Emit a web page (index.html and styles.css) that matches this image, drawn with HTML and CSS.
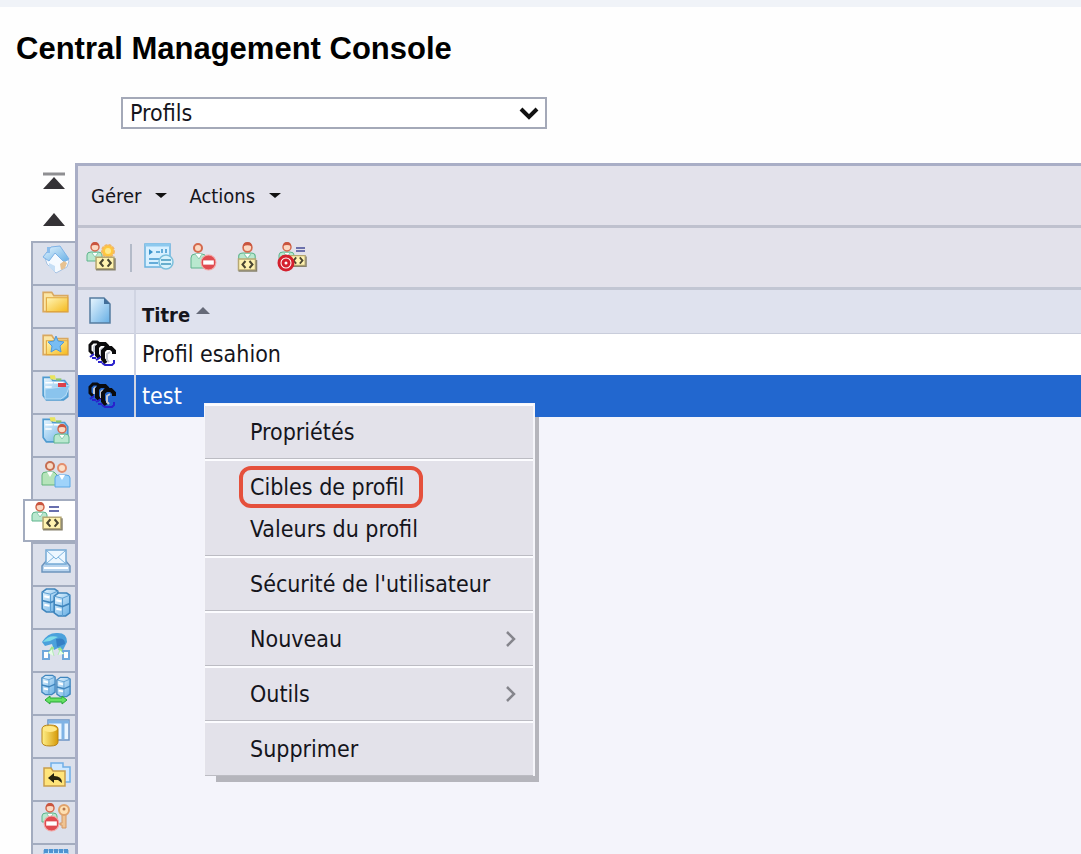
FILE: index.html
```
<!DOCTYPE html>
<html lang="fr">
<head>
    <meta charset="utf-8">
    <title>Central Management Console</title>
    <link rel="stylesheet" href="styles.css">
</head>
<body>

<!-- shared icon parts -->
<svg class="defs" aria-hidden="true">
    <defs>
        <linearGradient id="gold" x1="0" y1="0" x2="1" y2="1">
            <stop offset="0" stop-color="#fff6b8"/><stop offset="1" stop-color="#f5b91c"/>
        </linearGradient>
        <linearGradient id="blue" x1="0" y1="0" x2="1" y2="1">
            <stop offset="0" stop-color="#e8f6ff"/><stop offset="1" stop-color="#65aee4"/>
        </linearGradient>
        <linearGradient id="barrel" x1="0" y1="0" x2="1" y2="0">
            <stop offset="0" stop-color="#fff08a"/><stop offset="1" stop-color="#d69a08"/>
        </linearGradient>
        <symbol id="person" viewBox="0 0 18 20">
            <path d="M1 19v-6q0-3 4-3h7q4 0 4 3v6z" fill="#b9e8cf" stroke="#5fb48c"/>
            <path d="M6 11l3 4 3-4" fill="#fff" stroke="#8ccbb0"/>
            <circle cx="9" cy="5" r="4" fill="#fbd9c3" stroke="#d4694d" stroke-width="1.5"/>
            <path d="M5 4q0-4 4-4t4 4q-4-2-8 0" fill="#c9553f"/>
        </symbol>
        <symbol id="code" viewBox="0 0 20 14">
            <path d="M1 1h17v11H1z" fill="#fff3b0" stroke="#b6a873" stroke-width="1.5"/>
            <path d="M1 13h18V2" fill="none" stroke="#88826c" stroke-width="1.5"/>
            <path d="M8 3L5 6.500l3 3.500M12 3l3 3.500-3 3.500" fill="none" stroke="#4a4632" stroke-width="2"/>
        </symbol>
        <symbol id="folder" viewBox="0 0 28 22">
            <path d="M2 20V2h8l2 3h13v15z" fill="#fbe6a5" stroke="#d9a860" stroke-width="1.500"/>
            <path d="M5 7h20v13H5z" fill="url(#gold)" stroke="#e0a63c"/>
        </symbol>
        <symbol id="bluefolder" viewBox="0 0 28 25">
            <path d="M2 20V3h7l2 3h11l3 4v11l-4 3H5z" fill="url(#blue)" stroke="#4f9bd0" stroke-width="1.500"/>
            <path d="M4 8h7M4 12h6M12 8h9" stroke="#fff" stroke-width="1.500"/>
            <path d="M8 1h5l1 4H9z" fill="#e9e45c"/>
            <path d="M14 4h5v2h-5z" fill="#8cc66c"/>
        </symbol>
        <symbol id="server" viewBox="0 0 17 24">
            <path d="M1 4l4-3h8l3 2v17l-4 3H5l-4-3z" fill="url(#blue)" stroke="#3f85bd" stroke-width="1.500"/>
            <path d="M1 4l8 2 7-3M9 6v17" fill="none" stroke="#5d9fd2"/>
            <path d="M1 12l8 2 7-3" fill="none" stroke="#3f85bd" stroke-width="1.500"/>
            <path d="M3 8l5 1M3 16l5 1" stroke="#fff" stroke-width="2"/>
        </symbol>
        <symbol id="noentry" viewBox="0 0 16 16">
            <circle cx="8" cy="8" r="7" fill="#e04b50" stroke="#f3a7a5"/>
            <path d="M3 6h10v4H3z" fill="#fff"/>
        </symbol>
        <symbol id="profile" viewBox="0 0 28 30">
            <g fill="none">
                <path d="M12 5l-3-2H5L2 6v6l3 3" stroke="#0b0b0d" stroke-width="3"/>
                <path d="M8 6L6 8v5" stroke="#c4c8d2" stroke-width="2"/>
                <path d="M2 18l4-3M4 19h4" stroke="#2a22cc" stroke-width="2"/>
                <path d="M20 8l-3-3h-5L9 8v8l3 3" stroke="#0b0b0d" stroke-width="4"/>
                <path d="M15 9l-2 2v6" stroke="#c4c8d2" stroke-width="2"/>
                <path d="M8 21l5-3M10 23h4" stroke="#2a22cc" stroke-width="2"/>
                <path d="M26 15v-3l-3-3h-5l-3 3v8l3 4" stroke="#0b0b0d" stroke-width="4"/>
                <path d="M22 13l-3 2v6l2 2" stroke="#c4c8d2" stroke-width="2"/>
                <path d="M14 24l3 2h7l2-2v-3" stroke="#2a22cc" stroke-width="2"/>
            </g>
        </symbol>
    </defs>
</svg>

<div class="console">
    <header class="top">
        <h1>Central Management Console</h1>
        <div class="select-wrap">
            <select class="area" aria-label="Zone de gestion">
                <option>Profils</option>
            </select>
            <svg class="chevron" viewBox="0 0 20 14"><path d="M2 3l8 8 8-8" fill="none" stroke="#111" stroke-width="4"/></svg>
        </div>
    </header>

    <div class="workspace">
        <nav class="rail" aria-label="Navigation">
            <button class="scroll" aria-label="Haut"><svg width="24" height="20" viewBox="0 0 24 20"><path d="M1 2h22" stroke="#8f8f92" stroke-width="3"/><path d="M1 17L12 5l11 12z" fill="#343236"/></svg></button>
            <button class="scroll" aria-label="Monter"><svg width="24" height="20" viewBox="0 0 24 20"><path d="M1 17L12 4l11 13z" fill="#343236"/></svg></button>

            <button class="tab" aria-label="Accueil"><svg viewBox="0 0 30 32">
                <path d="M4 14l9-7 15 10-2 6-11 6-9-9z" fill="#f5faff" stroke="#a7c3e3"/>
                <path d="M2 13L10 3l9-1 9 13-5 3-9-9-6 8z" fill="url(#blue)" stroke="#7eb2e6"/>
                <path d="M8 19l6 3v6l-6-5z" fill="#c5def5"/><path d="M19 20l4-3 3 2-2 5-4 2z" fill="#e7c291"/>
                <path d="M6 3h3v6H6z" fill="#8bbdec"/>
            </svg></button>
            <button class="tab" aria-label="Dossiers"><svg viewBox="0 0 30 32"><use href="#folder" x="0" y="3" width="30" height="24"/></svg></button>
            <button class="tab" aria-label="Dossiers personnels"><svg viewBox="0 0 30 32">
                <use href="#folder" x="0" y="3" width="30" height="24"/>
                <path d="M15 6l2 5 6 1-4 4 1 6-5-3-5 3 1-6-4-4 6-1z" fill="#78bdf2" stroke="#4e9adb"/>
            </svg></button>
            <button class="tab" aria-label="Catégories"><svg viewBox="0 0 30 32">
                <use href="#bluefolder" x="0" y="1" width="30" height="27"/>
                <path d="M4 16q12-1 25-4l-4 10-5 4H4z" fill="#8ac4ed" stroke="#b9dff7"/>
                <path d="M17 10h8v4h-8z" fill="#dc4049"/>
            </svg></button>
            <button class="tab" aria-label="Catégories personnelles"><svg viewBox="0 0 30 32">
                <use href="#bluefolder" x="0" y="0" width="30" height="27"/>
                <use href="#person" x="12" y="8" width="18" height="20"/>
            </svg></button>
            <button class="tab" aria-label="Utilisateurs et groupes"><svg viewBox="0 0 30 32">
                <path d="M1 26V16q0-3 4-3h8l3 3v10z" fill="#b6e4ba" stroke="#63b47a"/>
                <path d="M14 28V19q0-3 4-3h7q4 0 4 3v9z" fill="#9fd3fa" stroke="#5aa7e6"/>
                <path d="M6 13l3 5 3-5M18 16l3 5 3-5" fill="#fff"/>
                <circle cx="9" cy="7" r="4" fill="#f9dac4" stroke="#c56d51" stroke-width="2"/>
                <circle cx="21" cy="9" r="4" fill="#fce1cb" stroke="#e48f6e" stroke-width="2"/>
            </svg></button>
            <button class="tab active" aria-label="Profils"><svg viewBox="0 0 32 32">
                <use href="#person" x="0" y="0" width="18" height="20"/>
                <path d="M18 5h10M18 9h10" stroke="#686fae" stroke-width="2"/>
                <use href="#code" x="11" y="14" width="21" height="15"/>
            </svg></button>
            <button class="tab" aria-label="Boîtes de réception"><svg viewBox="0 0 30 32">
                <path d="M1 21l5-6h18l5 6v6H1z" fill="#b8d4ee" stroke="#6c94bd" stroke-width="1.500"/>
                <path d="M5 5h20v14H5z" fill="#edf7ff" stroke="#74a9d5" stroke-width="1.500"/>
                <path d="M6 6l9 8 9-8M6 18l7-6M24 18l-7-6" fill="none" stroke="#7eb5df"/>
                <path d="M3 23h24" stroke="#fff" stroke-width="2"/>
            </svg></button>
            <button class="tab" aria-label="Serveurs"><svg viewBox="0 0 30 32">
                <use href="#server" x="0" y="0" width="18" height="25"/><use href="#server" x="12" y="4" width="18" height="25"/>
            </svg></button>
            <button class="tab" aria-label="Réplication"><svg viewBox="0 0 30 32">
                <path d="M1 11Q7 1 17 2q9 0 9 9l-4 8-5-2-4 2-2-6-7 2z" fill="#4ba1dc"/>
                <path d="M2 11q6-8 15-5l-8 4z" fill="#7edbe7"/>
                <path d="M15 8q9-2 9 5l-8 3z" fill="#347fc5"/>
                <path d="M12 16l-4 6M18 17l4 5" stroke="#9de78b" stroke-width="3"/>
                <path d="M2 20h6v8H2zM22 20h6v8h-6z" fill="#fff" stroke="#70a8dc" stroke-width="2"/>
                <path d="M7 22l4-4 2 7M17 24l2-5 4 4" fill="#e6fce8" stroke="#b3ecb5"/>
            </svg></button>
            <button class="tab" aria-label="Fédération"><svg viewBox="0 0 30 32">
                <use href="#server" x="0" y="0" width="15" height="22"/><use href="#server" x="15" y="2" width="15" height="22"/>
                <path d="M4 26l5-4v2h12v-2l5 4-5 4v-2H9v2z" fill="#65e163" stroke="#27a636"/>
            </svg></button>
            <button class="tab" aria-label="Univers"><svg viewBox="0 0 30 32">
                <path d="M7 3h21v20H7z" fill="#e9f5ff" stroke="#6d94c5" stroke-width="1.500"/><path d="M7 5h21M22 6v16" stroke="#7fb3e5" stroke-width="3"/>
                <path d="M1 12q0-4 8-4t8 4v13q0 4-8 4t-8-4z" fill="url(#barrel)" stroke="#b88316"/>
                <ellipse cx="9" cy="12" rx="7" ry="3" fill="#ffe887"/>
            </svg></button>
            <button class="tab" aria-label="Promotion"><svg viewBox="0 0 30 32">
                <path d="M10 3h12v4h7v15H10z" fill="#cfe8ff" stroke="#70afe8" stroke-width="1.500"/>
                <path d="M3 26V8h7l2 3h12v15z" fill="#ffe47a" stroke="#c99d4c" stroke-width="1.500"/>
                <path d="M7 18l6-5v3q8 0 8 7l-4-3h-4v3z" fill="#26220e"/>
            </svg></button>
            <button class="tab" aria-label="Niveaux d'accès"><svg viewBox="0 0 30 32">
                <use href="#person" x="0" y="0" width="18" height="20"/>
                <use href="#noentry" x="2" y="12" width="17" height="17"/>
                <path d="M21 11h4v14h-4v-3h-2v-2h2z" fill="#efc493" stroke="#d49764"/>
                <circle cx="23" cy="7" r="5" fill="#ffe0b2" stroke="#e0a36c" stroke-width="2"/><circle cx="23" cy="6" r="1.500" fill="#b67850"/>
            </svg></button>
            <button class="tab" aria-label="Calendriers"><svg viewBox="0 0 30 32">
                <path d="M3 4h24v22H3z" fill="#c8e2f8" stroke="#72a8d9"/><path d="M3 5h24" stroke="#4d94d2" stroke-width="4" stroke-dasharray="4 1"/><path d="M3 12h24M3 18h24M9 8v18M15 8v18M21 8v18" stroke="#78b1df"/>
            </svg></button>
        </nav>

        <main class="panel">
            <div class="menubar">
                <button>Gérer <span class="caret"></span></button>
                <button>Actions <span class="caret"></span></button>
            </div>
            <div class="toolbar">
                <button aria-label="Nouveau profil"><svg viewBox="0 0 32 32">
                    <use href="#person" x="0" y="0" width="18" height="20"/>
                    <circle cx="22" cy="9" r="6" fill="#ffc83d" stroke="#f3b764" stroke-width="2" stroke-dasharray="3 1"/><circle cx="22" cy="9" r="3" fill="#ffe98c"/>
                    <use href="#code" x="9" y="14" width="21" height="15"/>
                </svg></button>
                <span class="divider"></span>
                <button aria-label="Propriétés"><svg viewBox="0 0 32 32">
                    <path d="M1 2h25v23H1z" fill="#d8f0ff" stroke="#69b3e0" stroke-width="1.500"/>
                    <path d="M1 3h25" stroke="#8dc9ee" stroke-width="3"/><path d="M5 7v6l4-3z" fill="#3791ca"/><path d="M12 10h4M18 7v4M22 7v4M5 17h11M5 21h9" stroke="#65acd9" stroke-width="2"/>
                    <circle cx="22" cy="20" r="7" fill="#d8f2fb" stroke="#7bbfdc" stroke-width="1.500"/><path d="M17 18h10M17 22h10" stroke="#67aecd" stroke-width="2"/>
                </svg></button>
                <button aria-label="Supprimer"><svg viewBox="0 0 32 32">
                    <path d="M3 26V16q0-4 4-4h7q4 0 4 4v10z" fill="#b9e8cf" stroke="#5fb48c"/>
                    <path d="M7 12l4 5 3-5" fill="#fff" stroke="#8ccbb0"/>
                    <circle cx="10" cy="6" r="4" fill="#fbd9c3" stroke="#d4694d" stroke-width="2"/>
                    <use href="#noentry" x="12" y="12" width="17" height="17"/>
                </svg></button>
                <button aria-label="Valeurs du profil"><svg viewBox="0 0 32 32">
                    <use href="#person" x="5" y="0" width="21" height="22"/><use href="#code" x="5" y="16" width="21" height="14"/>
                </svg></button>
                <button aria-label="Cibles de profil"><svg viewBox="0 0 32 32">
                    <use href="#person" x="2" y="0" width="18" height="20"/><path d="M20 6h9M20 9h9" stroke="#6c71ac" stroke-width="2"/>
                    <use href="#code" x="13" y="12" width="18" height="14"/><circle cx="10" cy="21" r="7" fill="#fff" stroke="#d4202d" stroke-width="3"/><circle cx="10" cy="21" r="3" fill="#fff" stroke="#d4202d" stroke-width="3"/>
                </svg></button>
            </div>

            <table class="list">
                <thead>
                    <tr>
                        <th class="type" aria-label="Type"><svg width="24" height="28" viewBox="0 0 24 28"><path d="M2 1h14l6 6v19H2z" fill="url(#blue)" stroke="#557ca0" stroke-width="1.500"/><path d="M16 1v6h6z" fill="#426f9a"/></svg></th>
                        <th>Titre <span class="sort"></span></th>
                    </tr>
                </thead>
                <tbody>
                    <tr>
                        <td class="type"><svg width="28" height="30"><use href="#profile"/></svg></td>
                        <td>Profil esahion</td>
                    </tr>
                    <tr class="selected">
                        <td class="type"><svg width="28" height="30"><use href="#profile"/></svg></td>
                        <td>test</td>
                    </tr>
                </tbody>
            </table>

            <div class="context-menu">
                <div class="group">
                    <button>Propriétés</button>
                </div>
                <div class="group">
                    <button><span class="highlight">Cibles de profil</span></button>
                    <button>Valeurs du profil</button>
                </div>
                <div class="group">
                    <button>Sécurité de l'utilisateur</button>
                </div>
                <div class="group">
                    <button>Nouveau <svg width="12" height="18" viewBox="0 0 12 18"><path d="M2 2l7 7-7 7" fill="none" stroke="#85858c" stroke-width="2.500"/></svg></button>
                </div>
                <div class="group">
                    <button>Outils <svg width="12" height="18" viewBox="0 0 12 18"><path d="M2 2l7 7-7 7" fill="none" stroke="#85858c" stroke-width="2.500"/></svg></button>
                </div>
                <div class="group">
                    <button>Supprimer</button>
                </div>
            </div>
        </main>
    </div>
</div>

</body>
</html>
```
FILE: styles.css
```
* {
    box-sizing: border-box;
}
body {
    margin: 0;
    font-family: "DejaVu Sans Condensed", "DejaVu Sans", Tahoma, sans-serif;
    font-stretch: condensed;
    font-size: 23px;
    color: #15151c;
    background-color: #fefefe;
}
button {
    margin: 0;
    padding: 0;
    border: none;
    background: none;
    font: inherit;
    color: inherit;
    cursor: pointer;
}
svg {
    display: block;
}
.defs {
    position: absolute;
    width: 0;
    height: 0;
}
.console {
    display: flex;
    flex-direction: column;
    height: 100vh;
    overflow: hidden;
    border-top: 7px solid #f0f3f8;
}
.top {
    padding: 24px 16px 34px;
}
h1 {
    margin: 0 0 30px;
    font-family: "Liberation Sans", Arial, sans-serif;
    font-stretch: normal;
    font-size: 31px;
    line-height: 36px;
    color: #000;
}
.select-wrap {
    display: grid;
    width: 426px;
    margin-left: 105px;
    align-items: center;
}
.area {
    grid-area: 1 / 1;
    height: 32px;
    padding: 0 7px;
    border: 2px solid #a4a9b8;
    border-radius: 0;
    appearance: none;
    background-color: #fff;
    font: inherit;
    color: inherit;
}
.chevron {
    grid-area: 1 / 1;
    justify-self: end;
    width: 20px;
    margin-right: 8px;
    pointer-events: none;
}

.workspace {
    display: flex;
    flex: 1;
    min-height: 0;
}

/* left icon rail */
.rail {
    display: flex;
    flex-direction: column;
    align-items: flex-end;
    width: 75px;
    padding-top: 4px;
}
.scroll {
    flex: none;
    display: flex;
    justify-content: center;
    align-items: flex-start;
    width: 42px;
    height: 37px;
    padding-top: 5px;
}
.tab {
    flex: none;
    display: flex;
    align-items: flex-start;
    width: 44px;
    height: 43px;
    padding: 1px 0 0 8px;
    border: 2px solid #a3acbf;
    border-width: 2px 0 0 2px;
    background-color: #dce0eb;
}
.tab svg {
    flex: none;
    width: 30px;
    height: 32px;
}
.tab.active {
    width: 52px;
    padding-left: 6px;
    border-bottom-width: 2px;
    background-color: #fff;
}
.tab.active svg {
    width: 32px;
}

/* main panel */
.panel {
    position: relative;
    flex: 1;
    border: 3px solid #a9aec6;
    border-width: 3px 0 0 3px;
    background-color: #f4f4fb;
}
.menubar {
    display: flex;
    align-items: center;
    gap: 22px;
    height: 62px;
    padding-left: 13px;
    border-bottom: 3px solid #bfc1ce;
    background-color: #e3e2eb;
    font-size: 20px;
}
.menubar button {
    display: flex;
    align-items: center;
    gap: 14px;
}
.caret {
    border: 6px solid transparent;
    border-top: 5px solid #111;
    border-bottom: 0;
}
.toolbar {
    display: flex;
    align-items: center;
    gap: 12px;
    height: 62px;
    padding-left: 8px;
    border-bottom: 3px solid #c2c6d3;
    background-color: #e3e2eb;
}
.toolbar svg {
    width: 32px;
    height: 32px;
}
.divider {
    width: 2px;
    height: 28px;
    background-color: #b3bac8;
}
.list {
    width: 100%;
    border-collapse: collapse;
}
.list th {
    height: 43px;
    padding: 8px 0 0 6px;
    background-color: #dfe2ee;
    border-bottom: 1px solid #c9cddb;
    font-size: 20px;
    text-align: left;
}
.list td {
    height: 42px;
    padding: 0 0 0 6px;
    background-color: #fff;
}
.list .type {
    width: 57px;
    padding: 0 0 0 10px;
    border-right: 2px solid #d0d4e2;
}
.list .selected td {
    background-color: #2267cf;
    color: #fff;
}
.sort {
    display: inline-block;
    margin-bottom: 8px;
    border: 7px solid transparent;
    border-top: 0;
    border-bottom: 7px solid #666a78;
}

.context-menu {
    position: absolute;
    top: 237px;
    left: 126px;
    width: 331px;
    border: 1px solid #f5f5fa;
    border-width: 1px 2px 0 1px;
    background-color: #e3e2ea;
    box-shadow: 8px 10px 0 -4px #b5b5bc;
}
.group {
    padding: 5px 0;
    border-top: 2px solid #fcfcff;
    border-bottom: 1px solid #bcbcc3;
}
.group button {
    display: flex;
    align-items: center;
    justify-content: space-between;
    width: 100%;
    height: 42px;
    padding: 0 16px 0 45px;
}
.highlight {
    margin-left: -11px;
    padding: 4px 15px 4px 7px;
    border: 4px solid #e5503c;
    border-radius: 12px;
}
```
